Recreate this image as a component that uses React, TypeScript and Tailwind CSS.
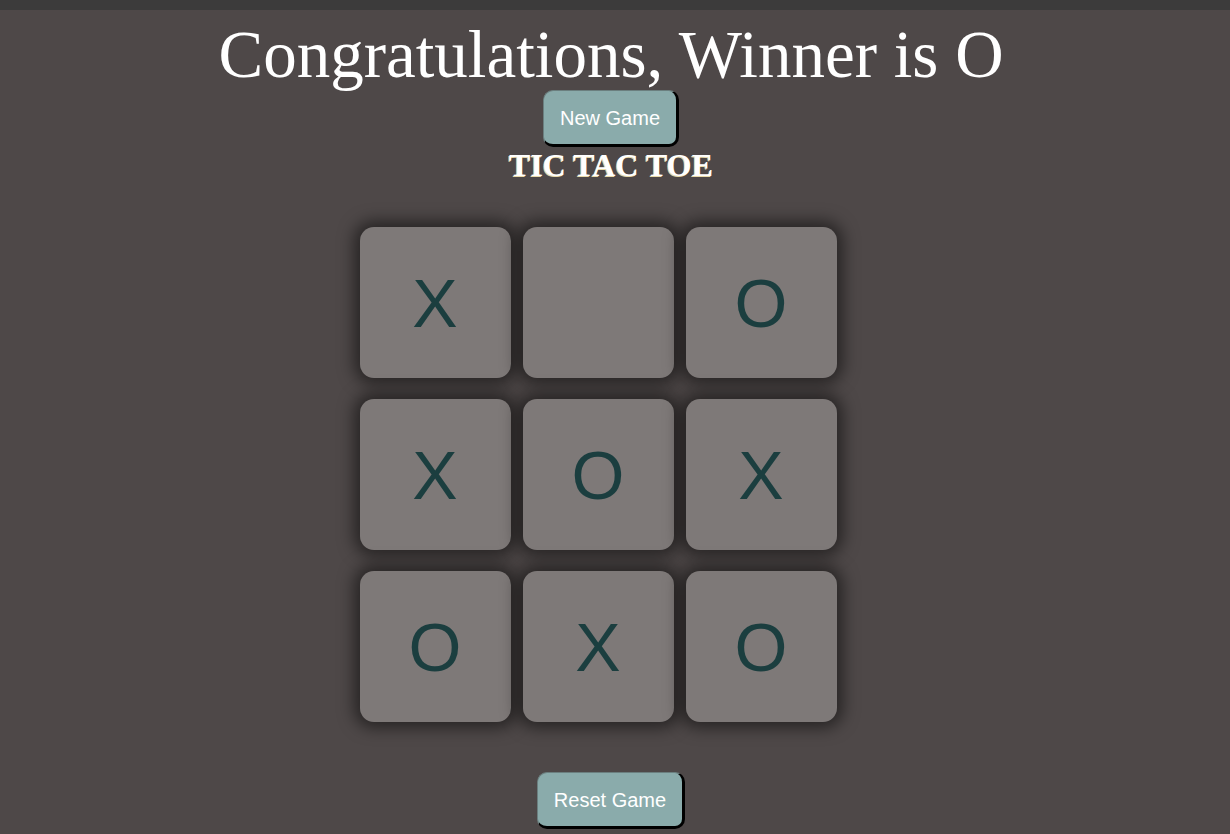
import React from "react";

const board = ["X", "", "O", "X", "O", "X", "O", "X", "O"];

const Cell = ({ value }: { value: string }) => {
  return (
    <div className="w-[151px] h-[151px] rounded-[14px] bg-[#7e7978] shadow-[0_0_16px_6px_rgba(0,0,0,0.5)] flex items-center justify-center text-[68px] leading-none text-[#1b3e3f] font-['Liberation_Sans',Arial,sans-serif]">
      {value}
    </div>
  );
};

const Button = ({ label }: { label: string }) => {
  return (
    <button className="h-[57px] px-[16px] rounded-[10px] bg-[#8aabab] text-white text-[20px] font-['Liberation_Sans',Arial,sans-serif] border-l border-t border-[#6b7f7f] border-r-[3px] border-b-[3px] border-r-black border-b-black">
      {label}
    </button>
  );
};

export default function App() {
  return (
    <div className="w-full min-h-[834px] bg-[#4e4848]">
      <div className="w-full h-[10px] bg-[#3c3b3b]"></div>
      <div className="w-[1222px] flex flex-col items-center">
        <h1 className="mt-[11px] mb-[2px] text-[67px] leading-[67px] text-white font-['Liberation_Serif','Times_New_Roman',serif]">
          Congratulations, Winner is O
        </h1>
        <Button label="New Game" />
        <h2 className="text-[32px] leading-[36px] font-bold text-white font-['Liberation_Serif','Times_New_Roman',serif] [text-shadow:-1px_1px_0_#e8d9a8]">
          TIC TAC TOE
        </h2>
        <div className="mt-[44px] mr-[26px] grid grid-cols-[151px_151px_151px] gap-x-[12px] gap-y-[21px]">
          {board.map((v, i) => (
            <Cell key={i} value={v} />
          ))}
        </div>
        <div className="mt-[50px]">
          <Button label="Reset Game" />
        </div>
      </div>
    </div>
  );
}
